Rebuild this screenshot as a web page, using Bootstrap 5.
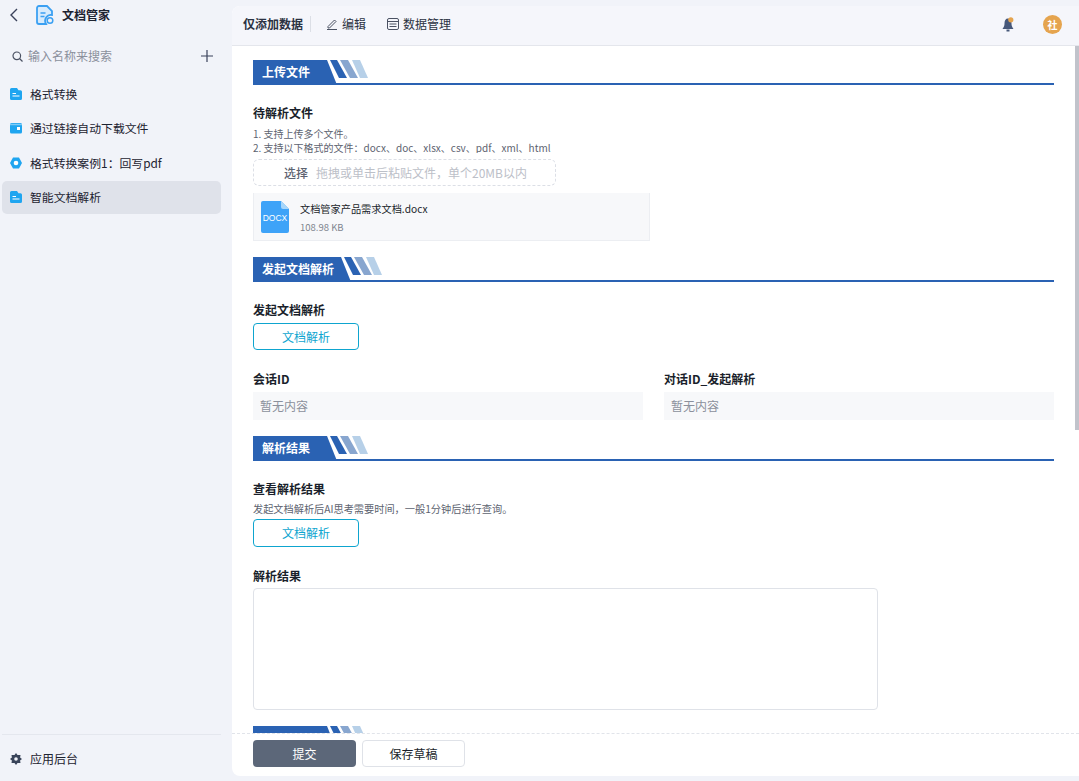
<!DOCTYPE html>
<html lang="zh-CN">
<head>
    <meta charset="UTF-8">
    <meta name="viewport" content="width=device-width, initial-scale=1.0">
    <title>文档管家</title>
    <link href="https://cdn.jsdelivr.net/npm/bootstrap@5.3.3/dist/css/bootstrap.min.css" rel="stylesheet">
    <style>
        body {
            background: #f1f3f9;
            color: #1c2230;
            font-family: "Noto Sans CJK SC", "Liberation Sans", sans-serif;
            font-size: 12px;
            overflow: hidden;
        }
        .app-side { width: 232px; padding: 0 11px 0 2px; }
        .side-head { height: 29px; padding-left: 8px; }
        .side-title { font-size: 12px; font-weight: 700; margin-left: 8px; }
        .logo-mark { margin-left: 18px; }
        .side-search { height: 20px; margin: 17px 0 11px; padding: 0 8px 0 10px; color: #8b909c; }
        .search-text { margin-left: 5px; }
        .side-item { height: 33px; margin-bottom: 1.5px; padding-left: 8px; border-radius: 5px; gap: 8px; font-size: 11.85px; }
        .side-item.is-on { background: #dfe2ea; }
        .side-foot { height: 47px; padding: 2px 8px 0; gap: 8px; border-top: 1px solid #e4e7ee; }
        .app-main { margin: 6px 0 5px; background: #fff; border-radius: 8px 0 0 8px; min-width: 0; }
        .top-bar { height: 40px; background: #f5f6fb; border-bottom: 1px solid #e4e6ec; padding: 0 17px 3px 11px; border-radius: 8px 0 0 0; color: #2b3242; }
        .top-title { font-weight: 700; padding-right: 7px; border-right: 1px solid #dcdfe6; line-height: 16px; }
        .top-link { margin-left: 15px; gap: 4px; margin-right: 21px; }
        .top-link + .top-link { margin-left: 0; }
        .bell-wrap { margin-right: 29px; }
        .user-dot { width: 19px; height: 19px; background: #e5a44e; color: #fff; font-size: 10px; font-weight: 700; }
        .scroll-area { overflow: hidden; padding: 14px 25px 0 21px; }
        .scroll-thumb { top: 0; right: 0; width: 4px; height: 384px; background: #c1c3cb; }
        .sec-head { height: 25px; border-bottom: 2px solid #2a62b3; margin-bottom: 20px; }
        .sec-title {
            height: 25px; margin-bottom: -2px; padding: 0 27px 0 9px; line-height: 23px;
            background: #2a62b3; color: #fff; font-weight: 700;
            clip-path: polygon(0 0, calc(100% - 10px) 0, 100% 100%, 0 100%);
        }
        .sec-title.is-long { padding-right: 17px; }
        .sec-title.is-cut { width: 84px; }
        .sec-bars { margin-left: -7px; }
        .fld-label { font-weight: 700; line-height: 16px; color: #1a1f2b; }
        .fld-help { font-size: 10px; line-height: 14px; color: #5d6370; }
        .help-cut { height: 32px; overflow: hidden; padding-top: 6px; }
        .help-gap { margin-top: 5px; font-size: 10.2px; }
        .drop-box { width: 303px; height: 27px; margin-top: 6px; border: 1px dashed #dcdfe6; border-radius: 6px; padding-left: 30px; gap: 8px; }
        .drop-pick { color: #5d6370; font-weight: 500; }
        .drop-tip { color: #bcc0c8; }
        .file-box { width: 397px; height: 48px; margin: 7px 0 16px; padding: 0 0 0 7px; gap: 11px; background: #f7f8fa; border: 1px solid #eceef2; border-top: 0; }
        .file-info { padding-top: 2px; }
        .file-name { font-size: 10.2px; line-height: 14px; color: #1a1f2b; }
        .file-size { font-size: 9.5px; line-height: 14px; margin-top: 4px; color: #80858f; }
        .act-btn { width: 106px; height: 27px; padding: 0; font-size: 12px; border: 1px solid #0ea5cf; border-radius: 4px; color: #0ea5cf; background: #fff; }
        .act-one { margin-top: 5px; }
        .act-two { margin-top: 3px; height: 28px; }
        .pair-row { grid-template-columns: 1fr 1fr; column-gap: 21px; margin: 21px 0 16px; }
        .fld-box { height: 28px; margin-top: 5px; padding-left: 7px; line-height: 28px; background: #f7f8fa; color: #8b909c; }
        .label-gap { margin-top: 21px; }
        .text-box { width: 625px; height: 122px; margin-top: 4px; border: 1px solid #dfe2e8; border-radius: 4px; }
        .head-gap { margin-top: 16px; }
        .foot-bar { height: 43px; padding: 6px 0 0 21px; gap: 6px; border-top: 1px dashed #e1e4ea; }
        .foot-btn { width: 103px; height: 27px; padding: 0; font-size: 12px; border-radius: 4px; }
        .foot-btn.is-main { background: #5c6779; color: #fff; border: 0; }
        .foot-btn.is-alt { background: #fff; color: #1a1f2b; border: 1px solid #dfe2e8; }
    </style>
</head>
<body>
    <div class="d-flex vh-100">
        <!-- 左侧菜单 -->
        <aside class="app-side d-flex flex-column flex-shrink-0">
            <div class="side-head d-flex align-items-center">
                <svg width="8" height="14" viewBox="0 0 8 14" fill="none" stroke="#39415a" stroke-width="1.4"><path d="M7 1 1 7l6 6"/></svg>
                <svg class="logo-mark" width="18" height="20" viewBox="0 0 18 20" fill="none" stroke="#3ba0f2" stroke-width="1.8"><path d="M11 1H3a2 2 0 0 0-2 2v14a2 2 0 0 0 2 2h7a6 6 0 0 1 6-9V6Z" fill="#d8ebfc"/><path d="M4.500 8h5M4.500 11.500h4" stroke-width="1.4"/><circle cx="14" cy="15.500" r="2.800" stroke-width="1.500"/></svg>
                <span class="side-title">文档管家</span>
            </div>
            <div class="side-search d-flex align-items-center">
                <svg width="11" height="11" viewBox="0 0 11 11" fill="none" stroke="#4b5263" stroke-width="1.200"><circle cx="4.800" cy="4.800" r="3.800"/><path d="m7.500 7.500 3 3"/></svg>
                <span class="search-text flex-grow-1">输入名称来搜索</span>
                <svg width="12" height="12" viewBox="0 0 12 12" stroke="#39415a" stroke-width="1.200"><path d="M6 0v12M0 6h12"/></svg>
            </div>
            <div class="side-item d-flex align-items-center">
                <svg width="12" height="12" viewBox="0 0 12 12"><path d="M1.500 0H7l1.500 2.200h2A1.500 1.500 0 0 1 12 3.700v6.800a1.500 1.500 0 0 1-1.500 1.500h-9A1.500 1.500 0 0 1 0 10.500v-9A1.500 1.500 0 0 1 1.500 0Z" fill="#1fa5f0"/><path d="M2.500 5.500h3.500M2.500 8h7" stroke="#fff" stroke-width="1.200"/></svg>
                <span>格式转换</span>
            </div>
            <div class="side-item d-flex align-items-center">
                <svg width="12" height="12" viewBox="0 0 12 12"><rect y="1" width="12" height="10.500" rx="1.500" fill="#1fa5f0"/><path d="M0 2.500h12" stroke="#7fcbf6" stroke-width="1.500"/><rect x="7" y="5" width="3" height="3" fill="#fff"/></svg>
                <span>通过链接自动下载文件</span>
            </div>
            <div class="side-item d-flex align-items-center">
                <svg width="12" height="12" viewBox="0 0 12 12"><path d="M3 .5h6L12 6l-3 5.500H3L0 6Z" fill="#1fa5f0"/><circle cx="6" cy="6" r="2.300" fill="#fff"/></svg>
                <span>格式转换案例1：回写pdf</span>
            </div>
            <div class="side-item is-on d-flex align-items-center">
                <svg width="12" height="12" viewBox="0 0 12 12"><path d="M1.500 0H7l1.500 2.200h2A1.500 1.500 0 0 1 12 3.700v6.800a1.500 1.500 0 0 1-1.500 1.500h-9A1.500 1.500 0 0 1 0 10.500v-9A1.500 1.500 0 0 1 1.500 0Z" fill="#1fa5f0"/><path d="M2.500 5.500h3.500M2.500 8h7" stroke="#fff" stroke-width="1.200"/></svg>
                <span>智能文档解析</span>
            </div>
            <div class="side-foot mt-auto d-flex align-items-center">
                <svg width="12" height="12" viewBox="0 0 12 12"><path d="M6 0l1.500 2h3l-.4 2.500L12 6l-1.900 1.500.4 2.500h-3L6 12l-1.500-2h-3l.4-2.500L0 6l1.900-1.500L1.500 2h3Z" fill="#39445a"/><circle cx="6" cy="6" r="1.800" fill="#f1f3f9"/></svg>
                <span>应用后台</span>
            </div>
        </aside>

        <!-- 主内容 -->
        <main class="app-main flex-grow-1 d-flex flex-column">
            <div class="top-bar d-flex align-items-center flex-shrink-0">
                <span class="top-title">仅添加数据</span>
                <span class="top-link d-flex align-items-center">
                    <svg width="12" height="12" viewBox="0 0 12 12" fill="none" stroke="#4b5263"><path d="M2 8.500 8.500 2l1.500 1.500L3.500 10H2ZM1 11.500h10"/></svg>
                    编辑
                </span>
                <span class="top-link d-flex align-items-center">
                    <svg width="12" height="12" viewBox="0 0 12 12" fill="none" stroke="#4b5263"><rect x=".5" y=".5" width="11" height="11" rx="1.500"/><path d="M.5 3.500h11M2.500 6h7M2.500 8.500h7"/></svg>
                    数据管理
                </span>
                <span class="bell-wrap ms-auto d-flex">
                    <svg width="12" height="15" viewBox="0 0 12 15"><path d="M6 1.500C3.500 1.500 2.500 3.500 2.500 6.500c0 2-.5 3.500-2 5.500h11c-1.500-2-2-3.500-2-5.500 0-3-1-5-3.500-5Z" fill="#47587a"/><rect x="4.500" y="12.500" width="3" height="2" fill="#47587a"/><circle cx="8.800" cy="2.800" r="2.600" fill="#e5a44e"/></svg>
                </span>
                <span class="user-dot rounded-circle d-flex align-items-center justify-content-center">社</span>
            </div>

            <div class="scroll-area flex-grow-1 position-relative">
                <div class="scroll-thumb position-absolute"></div>
                <div class="sec-head d-flex">
                    <div class="sec-title">上传文件</div>
                    <svg class="sec-bars" width="40" height="18" viewBox="0 0 40 18"><path d="M0 0h7l10 18H9Z" fill="#2a62b3"/><path d="M10 0h8l10 18h-8Z" fill="#88a6cf"/><path d="M22 0h8l8 18h-8Z" fill="#b7d0e8"/></svg>
                </div>
                <div class="fld-label">待解析文件</div>
                <div class="fld-help help-cut">1. 支持上传多个文件。<br>2. 支持以下格式的文件：docx、doc、xlsx、csv、pdf、xml、html</div>
                <div class="drop-box d-flex align-items-center">
                    <span class="drop-pick">选择</span>
                    <span class="drop-tip">拖拽或单击后粘贴文件，单个20MB以内</span>
                </div>
                <div class="file-box d-flex align-items-center">
                    <svg width="28" height="32" viewBox="0 0 28 32"><path d="M2 0h18l8 8v22a2 2 0 0 1-2 2H2a2 2 0 0 1-2-2V2a2 2 0 0 1 2-2Z" fill="#3ea3f8"/><path d="M20 0l8 8h-6a2 2 0 0 1-2-2Z" fill="#a6d6fb"/><text x="14" y="20" text-anchor="middle" font-size="8.500" fill="#fff" font-family="Liberation Sans">DOCX</text></svg>
                    <div class="file-info">
                        <div class="file-name">文档管家产品需求文档.docx</div>
                        <div class="file-size">108.98 KB</div>
                    </div>
                </div>

                <div class="sec-head d-flex">
                    <div class="sec-title is-long">发起文档解析</div>
                    <svg class="sec-bars" width="40" height="18" viewBox="0 0 40 18"><path d="M0 0h7l10 18H9Z" fill="#2a62b3"/><path d="M10 0h8l10 18h-8Z" fill="#88a6cf"/><path d="M22 0h8l8 18h-8Z" fill="#b7d0e8"/></svg>
                </div>
                <div class="fld-label">发起文档解析</div>
                <button class="btn act-btn act-one d-block" type="button">文档解析</button>
                <div class="pair-row d-grid">
                    <div>
                        <div class="fld-label">会话ID</div>
                        <div class="fld-box">暂无内容</div>
                    </div>
                    <div>
                        <div class="fld-label">对话ID_发起解析</div>
                        <div class="fld-box">暂无内容</div>
                    </div>
                </div>

                <div class="sec-head d-flex">
                    <div class="sec-title">解析结果</div>
                    <svg class="sec-bars" width="40" height="18" viewBox="0 0 40 18"><path d="M0 0h7l10 18H9Z" fill="#2a62b3"/><path d="M10 0h8l10 18h-8Z" fill="#88a6cf"/><path d="M22 0h8l8 18h-8Z" fill="#b7d0e8"/></svg>
                </div>
                <div class="fld-label">查看解析结果</div>
                <div class="fld-help help-gap">发起文档解析后AI思考需要时间，一般1分钟后进行查询。</div>
                <button class="btn act-btn act-two d-block" type="button">文档解析</button>
                <div class="fld-label label-gap">解析结果</div>
                <div class="text-box"></div>

                <div class="sec-head d-flex head-gap">
                    <div class="sec-title is-cut"></div>
                    <svg class="sec-bars" width="40" height="18" viewBox="0 0 40 18"><path d="M0 0h7l10 18H9Z" fill="#2a62b3"/><path d="M10 0h8l10 18h-8Z" fill="#88a6cf"/><path d="M22 0h8l8 18h-8Z" fill="#b7d0e8"/></svg>
                </div>
            </div>

            <div class="foot-bar d-flex flex-shrink-0 align-items-start">
                <button class="btn foot-btn is-main" type="button">提交</button>
                <button class="btn foot-btn is-alt" type="button">保存草稿</button>
            </div>
        </main>
    </div>
    <script src="https://cdn.jsdelivr.net/npm/bootstrap@5.3.3/dist/js/bootstrap.bundle.min.js"></script>
</body>
</html>
